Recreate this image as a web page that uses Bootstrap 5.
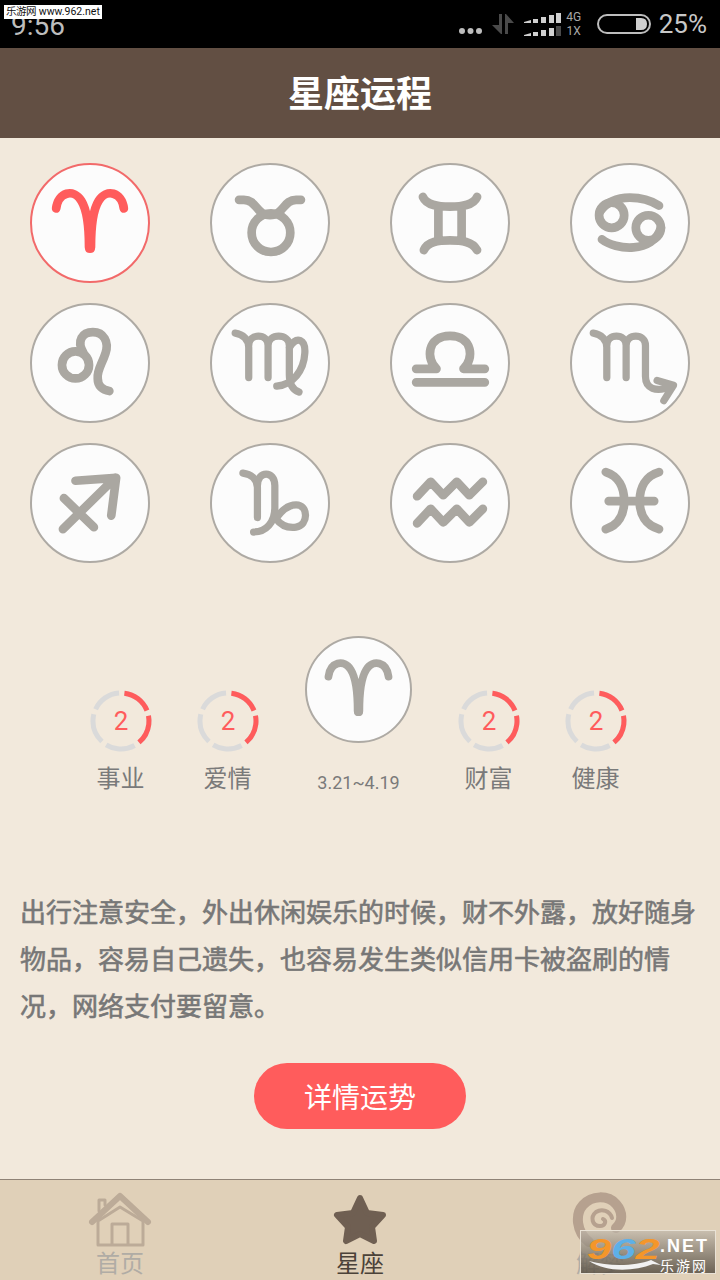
<!DOCTYPE html>
<html lang="zh-CN">
<head>
    <meta charset="UTF-8">
    <meta name="viewport" content="width=device-width, initial-scale=1.0">
    <title>星座运程</title>
    <link href="https://cdn.jsdelivr.net/npm/bootstrap@5.3.0/dist/css/bootstrap.min.css" rel="stylesheet">
    <style>
        body {
            background: #f2e9dc;
            font-family: "Noto Sans CJK SC", "Noto Sans", sans-serif;
        }
        .app-page { width: 720px; height: 1280px; }

        .status-strip { height: 48px; background: #000; color: #bdbdbd; font-family: Roboto, sans-serif; padding: 0 13px 0 12px; }
        .status-time { font-size: 28px; line-height: 1; margin-top: 4px; margin-left: -1px; }
        .status-dots { margin-top: 14px; }
        .status-net { font-size: 12px; line-height: 14px; color: #a8a8a8; width: 18px; margin-left: 3px; margin-right: 14px; }
        .status-pct { font-size: 26px; line-height: 1; color: #c8c8c8; }
        .site-stamp { top: 5px; left: 4px; width: 98px; height: 14px; background: #fff; color: #111; font-size: 10.5px; line-height: 14px; white-space: nowrap; text-align: center; }

        .title-bar { height: 90px; padding-bottom: 4px; background: #624f43; color: #fff; font-size: 36px; font-weight: 700; }

        .sign-grid { padding-top: 15px; }
        .sign-cell { height: 140px; }
        .sign-disc { width: 120px; height: 120px; background: #fcfcfc; border: 2px solid #aeaaa4; color: #aaa7a1; }
        .sign-disc.is-active { border-color: #f26a6a; color: #ff5c5c; }
        .sign-disc svg { display: block; width: 116px; height: 116px; overflow: visible; }
        .sign-disc path, .sign-disc circle { fill: none; stroke: currentColor; stroke-width: 9; stroke-linecap: round; stroke-linejoin: round; }
        .sign-disc path.thin-glyph { stroke-width: 7.5; }
        .sign-disc.is-small { width: 107px; height: 107px; }
        .sign-disc.is-small svg { width: 103px; height: 103px; }

        .fortune-row { margin-top: 63px; padding-right: 4px; }
        .fortune-item { width: 107px; padding-bottom: 2px; }
        .fortune-center { width: 107px; margin: 0 23px 0 24px; }
        .fortune-label { margin-top: 8px; font-size: 24px; line-height: 34px; color: #7a7a7a; }
        .fortune-date { margin-top: 27px; font-family: Roboto, sans-serif; font-size: 18px; line-height: 26px; color: #7a7a7a; }
        .ring-back, .ring-front { fill: none; stroke-width: 5; }
        .ring-back { stroke: #dadada; stroke-dasharray: 61 11; }
        .ring-front { stroke: #ff5c5c; stroke-dasharray: 61 11 61 227; }
        .ring-num { font-family: Roboto, sans-serif; font-size: 26px; fill: #ff5c5c; text-anchor: middle; }

        .fortune-text { margin: 91px 0 0; padding: 0 20px; font-size: 26px; line-height: 47px; font-weight: 400; color: #777; -webkit-text-stroke: .6px #777; }
        .detail-btn { width: 212px; height: 66px; margin-top: 35px; border: 0; border-radius: 33px; background: #ff5c5c; color: #fff; font-size: 28px; line-height: 66px; padding: 0; }
        .detail-btn:hover { background: #ff5c5c; color: #fff; }

        .tab-strip { height: 101px; background: #e0d0b8; border-top: 1px solid #8f8276; padding-top: 12px; }
        .tab-icon { height: 56px; }
        .tab-name { font-size: 24px; line-height: 28px; color: #b0aca5; }
        .tab-name.is-on { color: #4b4239; }

        .mark-962 { right: 4px; bottom: 6px; width: 136px; height: 44px; background: linear-gradient(180deg, rgba(190,182,170,.7), rgba(88,80,68,.85)); border: 1px solid #e9e2d6; }
        .mark-num { left: 6px; top: 1px; font: italic 700 30px/34px "Liberation Sans", sans-serif; color: #f4962a; transform: scaleX(1.45); transform-origin: left center; white-space: nowrap; }
        .mark-num span { color: #5db0e8; }
        .mark-net { left: 79px; top: 5px; font: 700 18px/20px "Liberation Sans", sans-serif; letter-spacing: 2px; color: #fff; }
        .mark-cn { left: 79px; top: 25px; font-size: 14px; line-height: 18px; letter-spacing: 2px; color: #fff; }
        .mark-swoosh { left: 8px; top: 28px; }
    </style>
</head>
<body>
    <svg width="0" height="0" class="position-absolute">
        <symbol id="aries" viewBox="0 0 120 120">
            <path fill="none" stroke="currentColor" stroke-width="9" stroke-linecap="round" d="M25 45 C27 28 43 24 51 37 C56 45 59 58 59 85 M95 45 C93 28 77 24 69 37 C64 45 61 58 61 85"/>
            <path fill="currentColor" d="M55 50 Q57 72 55 87 Q55 91 60 91 Q65 91 65 87 Q63 72 65 50 L60 54 Z"/>
        </symbol>
    </svg>

    <div class="app-page d-flex flex-column overflow-hidden position-relative">
        <!-- status bar -->
        <div class="status-strip d-flex align-items-center justify-content-between position-relative">
            <span class="status-time">9:56</span>
            <div class="d-flex align-items-center">
                <svg class="status-dots" width="24" height="8" viewBox="0 0 24 8"><circle cx="3" cy="4" r="3" fill="#bdbdbd"/><circle cx="11.5" cy="4" r="3" fill="#bdbdbd"/><circle cx="20" cy="4" r="3" fill="#bdbdbd"/></svg>
                <svg class="ms-2" width="24" height="20" viewBox="0 0 24 20"><path d="M1 11 H8 V0 H11 V20 H10 Z" fill="#4a4a4a"/><path d="M14 0 H15 L23 9 H17 V20 H14 Z" fill="#4a4a4a"/></svg>
                <svg class="ms-2" width="39" height="23" viewBox="0 0 39 23">
                    <g fill="#d0d0d0">
                        <path d="M1 9 L8 7 V10 H1 Z"/><rect x="10" y="6" width="5" height="4"/><rect x="18" y="4" width="5" height="6"/><rect x="26" y="2" width="5" height="8"/><rect x="33" y="0" width="5" height="10"/>
                        <path d="M1 22 L8 20 V23 H1 Z"/><rect x="10" y="19" width="5" height="4"/><rect x="18" y="17" width="5" height="6"/><rect x="26" y="15" width="5" height="8"/>
                    </g>
                    <rect x="33" y="13" width="5" height="10" fill="#4a4a4a"/>
                </svg>
                <div class="status-net text-center"><div>4G</div><div>1X</div></div>
                <svg width="54" height="20" viewBox="0 0 54 20"><rect x="1" y="1" width="52" height="18" rx="9" fill="none" stroke="#bdbdbd" stroke-width="2"/><path d="M39 4 H44 Q50 4 50 10 Q50 16 44 16 H39 Z" fill="#cfcfcf"/></svg>
                <span class="status-pct ms-2">25%</span>
            </div>
            <div class="site-stamp position-absolute">乐游网 www.962.net</div>
        </div>

        <div class="title-bar d-flex align-items-center justify-content-center">星座运程</div>

        <main class="flex-grow-1">
            <div class="sign-grid row g-0">
                <div class="sign-cell col-3 d-flex align-items-center justify-content-center">
                    <div class="sign-disc is-active rounded-circle"><svg><use href="#aries"/></svg></div>
                </div>
                <div class="sign-cell col-3 d-flex align-items-center justify-content-center">
                    <div class="sign-disc rounded-circle"><svg viewBox="0 0 120 120"><path d="M28 36 H33 C46 36 46 52 60 52 C74 52 74 36 87 36 H92"/><circle cx="61" cy="70" r="20"/></svg></div>
                </div>
                <div class="sign-cell col-3 d-flex align-items-center justify-content-center">
                    <div class="sign-disc rounded-circle"><svg viewBox="0 0 120 120"><path d="M32 33 C36 42 48 43 60 43 C72 43 84 42 88 33 M33 88 C37 79 48 78 60 78 C72 78 83 79 88 88 M48 43 V78 M72 43 V78"/></svg></div>
                </div>
                <div class="sign-cell col-3 d-flex align-items-center justify-content-center">
                    <div class="sign-disc rounded-circle"><svg viewBox="0 0 120 120"><circle cx="41" cy="52" r="13"/><circle cx="79" cy="65" r="13"/><path d="M90 42 C76 33 44 27 29 48 M31 77 C45 88 84 92 92 65"/></svg></div>
                </div>

                <div class="sign-cell col-3 d-flex align-items-center justify-content-center">
                    <div class="sign-disc rounded-circle"><svg viewBox="0 0 120 120"><circle cx="45" cy="62" r="14"/><path d="M53 49 C46 37 52 28 63 28 C74 28 80 38 76 50 C72 62 67 68 68 76 C68 84 73 88 80 89"/></svg></div>
                </div>
                <div class="sign-cell col-3 d-flex align-items-center justify-content-center">
                    <div class="sign-disc rounded-circle"><svg viewBox="0 0 120 120"><path class="thin-glyph" d="M24 29 C32 30 38 36 38 44 V75 M38 42 C38 29 58 29 58 42 V75 M58 42 C58 29 80 29 80 42 V72 C80 82 84 88 90 90 M80 44 C88 31 97 36 96 50 C95 68 84 82 67 84"/></svg></div>
                </div>
                <div class="sign-cell col-3 d-flex align-items-center justify-content-center">
                    <div class="sign-disc rounded-circle"><svg viewBox="0 0 120 120"><path d="M25 66 H46 C35 56 36 32 60 32 C84 32 85 56 74 66 H96 M25 80 H96"/></svg></div>
                </div>
                <div class="sign-cell col-3 d-flex align-items-center justify-content-center">
                    <div class="sign-disc rounded-circle"><svg viewBox="0 0 120 120"><path class="thin-glyph" d="M22 29 C30 30 36 36 36 44 V75 M36 42 C36 29 56 29 56 42 V75 M56 42 C56 29 76 29 76 42 V74 C76 86 86 91 104 84 M88 78 L105 83 L95 99"/></svg></div>
                </div>

                <div class="sign-cell col-3 d-flex align-items-center justify-content-center">
                    <div class="sign-disc rounded-circle"><svg viewBox="0 0 120 120"><path d="M32 87 L86 34 M45 37 L87 34 L82 73 M33 55 L64 85"/></svg></div>
                </div>
                <div class="sign-cell col-3 d-flex align-items-center justify-content-center">
                    <div class="sign-disc rounded-circle"><svg viewBox="0 0 120 120"><path class="thin-glyph" d="M32 29 C40 30 47 35 47 44 V75 M47 42 C47 26 65 26 65 42 V65 C65 80 56 90 43 90 M66 76 C72 84 80 86 87 85 C100 83 100 62 87 62 C78 62 72 68 66 76"/></svg></div>
                </div>
                <div class="sign-cell col-3 d-flex align-items-center justify-content-center">
                    <div class="sign-disc rounded-circle"><svg viewBox="0 0 120 120"><path d="M26 53 L40 38 L53 52 L67 38 L80 52 L94 38 M26 81 L40 66 L53 80 L67 66 L80 80 L94 66"/></svg></div>
                </div>
                <div class="sign-cell col-3 d-flex align-items-center justify-content-center">
                    <div class="sign-disc rounded-circle"><svg viewBox="0 0 120 120"><path d="M35 28 C48 32 54 44 54 58 C54 72 48 83 35 87 M90 28 C76 32 70 44 70 58 C70 72 76 83 90 87 M38 58 H85"/></svg></div>
                </div>
            </div>

            <div class="fortune-row d-flex justify-content-center align-items-end">
                <div class="fortune-item text-center">
                    <svg width="62" height="62" viewBox="0 0 62 62" class="d-block mx-auto"><circle class="ring-back" cx="31" cy="31" r="28" pathLength="360" transform="rotate(-83 31 31)"/><circle class="ring-front" cx="31" cy="31" r="28" pathLength="360" transform="rotate(-83 31 31)"/><text class="ring-num" x="31" y="40">2</text></svg>
                    <div class="fortune-label">事业</div>
                </div>
                <div class="fortune-item text-center">
                    <svg width="62" height="62" viewBox="0 0 62 62" class="d-block mx-auto"><circle class="ring-back" cx="31" cy="31" r="28" pathLength="360" transform="rotate(-83 31 31)"/><circle class="ring-front" cx="31" cy="31" r="28" pathLength="360" transform="rotate(-83 31 31)"/><text class="ring-num" x="31" y="40">2</text></svg>
                    <div class="fortune-label">爱情</div>
                </div>
                <div class="fortune-center text-center">
                    <div class="sign-disc is-small rounded-circle"><svg><use href="#aries"/></svg></div>
                    <div class="fortune-date">3.21~4.19</div>
                </div>
                <div class="fortune-item text-center">
                    <svg width="62" height="62" viewBox="0 0 62 62" class="d-block mx-auto"><circle class="ring-back" cx="31" cy="31" r="28" pathLength="360" transform="rotate(-83 31 31)"/><circle class="ring-front" cx="31" cy="31" r="28" pathLength="360" transform="rotate(-83 31 31)"/><text class="ring-num" x="31" y="40">2</text></svg>
                    <div class="fortune-label">财富</div>
                </div>
                <div class="fortune-item text-center">
                    <svg width="62" height="62" viewBox="0 0 62 62" class="d-block mx-auto"><circle class="ring-back" cx="31" cy="31" r="28" pathLength="360" transform="rotate(-83 31 31)"/><circle class="ring-front" cx="31" cy="31" r="28" pathLength="360" transform="rotate(-83 31 31)"/><text class="ring-num" x="31" y="40">2</text></svg>
                    <div class="fortune-label">健康</div>
                </div>
            </div>

            <p class="fortune-text">出行注意安全，外出休闲娱乐的时候，财不外露，放好随身物品，容易自己遗失，也容易发生类似信用卡被盗刷的情况，网络支付要留意。</p>

            <div class="text-center">
                <button type="button" class="btn detail-btn">详情运势</button>
            </div>
        </main>

        <!-- bottom tabs -->
        <div class="tab-strip row g-0">
            <div class="col-4 d-flex flex-column align-items-center">
                <div class="tab-icon">
                    <svg width="64" height="56" viewBox="0 0 64 56" fill="none" stroke="#bcab98" stroke-linecap="round" stroke-linejoin="round">
                        <path stroke-width="6" d="M4 30 L32 4 L60 30"/>
                        <path stroke-width="3" d="M10 29 L32 15 L55 29 V53 H10 Z M24 53 V32 H40 V53 M11 19 V8 H17 V13"/>
                    </svg>
                </div>
                <div class="tab-name">首页</div>
            </div>
            <div class="col-4 d-flex flex-column align-items-center">
                <div class="tab-icon">
                    <svg width="54" height="56" viewBox="0 0 54 56"><path fill="#6f5f52" stroke="#6f5f52" stroke-width="6" stroke-linejoin="round" d="M27 6 L34 21 L50 23 L39 35 L41 49 L27 42 L13 49 L15 35 L4 23 L20 21 Z"/></svg>
                </div>
                <div class="tab-name is-on">星座</div>
            </div>
            <div class="col-4 d-flex flex-column align-items-center">
                <div class="tab-icon">
                    <svg width="56" height="56" viewBox="0 0 56 56" fill="none" stroke="#b6a18f" stroke-linecap="round">
                        <path stroke-width="10" d="M17 50 C4 40 3 22 11 13 C20 3 36 3 44 12 C51 20 51 30 44 36"/>
                        <path stroke-width="4" d="M40 26 C38 19 30 16 24 20 C18 25 20 34 28 34 C33 34 35 29 31 27"/>
                    </svg>
                </div>
                <div class="tab-name">解梦</div>
            </div>
        </div>

        <div class="mark-962 position-absolute">
            <div class="mark-num position-absolute">9<span>6</span>2</div>
            <div class="mark-net position-absolute">.NET</div>
            <div class="mark-cn position-absolute">乐游网</div>
            <svg class="mark-swoosh position-absolute" width="72" height="14" viewBox="0 0 72 14"><path d="M0 2 C16 13 44 13 64 5 L72 6 L62 1 C46 7 22 8 0 2 Z" fill="#f2f2f2"/></svg>
        </div>
    </div>

    <script src="https://cdn.jsdelivr.net/npm/bootstrap@5.3.0/dist/js/bootstrap.bundle.min.js"></script>
</body>
</html>
